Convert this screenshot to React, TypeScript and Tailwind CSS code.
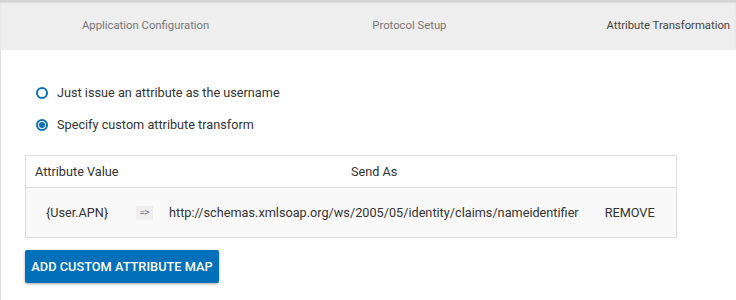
export default function App() {
  return (
    <div className="w-[736px] h-[300px] bg-white overflow-hidden font-['Roboto',sans-serif] text-[#333] whitespace-nowrap">
      {/* Steps bar */}
      <div className="h-[50px] bg-[#eeeeee] border-t-2 border-[#d4d4d4] shadow-[inset_0_1px_2px_rgba(0,0,0,0.08)] flex items-center text-[11.3px]">
        <span className="shrink-0 ml-[82px] text-[#777]">Application Configuration</span>
        <span className="shrink-0 ml-[163px] text-[#777]">Protocol Setup</span>
        <span className="shrink-0 ml-[160px] text-[#444]">Attribute Transformation</span>
      </div>

      <div className="h-[250px] border-l border-[#dddddd] pl-[24px] pt-[33px] text-[12.7px]">
        {/* Options */}
        <div className="flex flex-col gap-[13px] pl-[11px]">
          <label className="flex items-center gap-[9px]">
            <span className="w-[12px] h-[12px] rounded-full border-2 border-[#0b6fb8]" />
            <span>Just issue an attribute as the username</span>
          </label>
          <label className="flex items-center gap-[9px]">
            <span className="w-[12px] h-[12px] rounded-full border-2 border-[#0b6fb8] flex items-center justify-center">
              <span className="w-[6px] h-[6px] rounded-full bg-[#0b6fb8]" />
            </span>
            <span>Specify custom attribute transform</span>
          </label>
        </div>

        {/* Table */}
        <div className="mt-[21px] w-[652px] border border-[#dddddd]">
          <div className="h-[32px] flex items-center border-b border-[#dddddd]">
            <span className="ml-[9px] w-[316px]">Attribute Value</span>
            <span>Send As</span>
          </div>
          <div className="h-[49px] flex items-center bg-[#f9f9f9]">
            <span className="ml-[20px] w-[90px]">{'{User.APN}'}</span>
            <span className="w-[17px] h-[14px] bg-[#eeeeee] text-[8px] text-[#666] flex items-center justify-center font-['DejaVu_Sans_Mono',monospace]">
              {'=>'}
            </span>
            <span className="ml-[16px]">http://schemas.xmlsoap.org/ws/2005/05/identity/claims/nameidentifier</span>
            <span className="ml-[26px]">REMOVE</span>
          </div>
        </div>

        {/* Button */}
        <button className="mt-[12px] h-[33px] w-[194px] rounded-[2px] bg-[#0070ba] text-white text-[12.8px] font-medium shadow-[0_1px_3px_rgba(0,0,0,0.35)]">
          ADD CUSTOM ATTRIBUTE MAP
        </button>
      </div>
    </div>
  );
}
